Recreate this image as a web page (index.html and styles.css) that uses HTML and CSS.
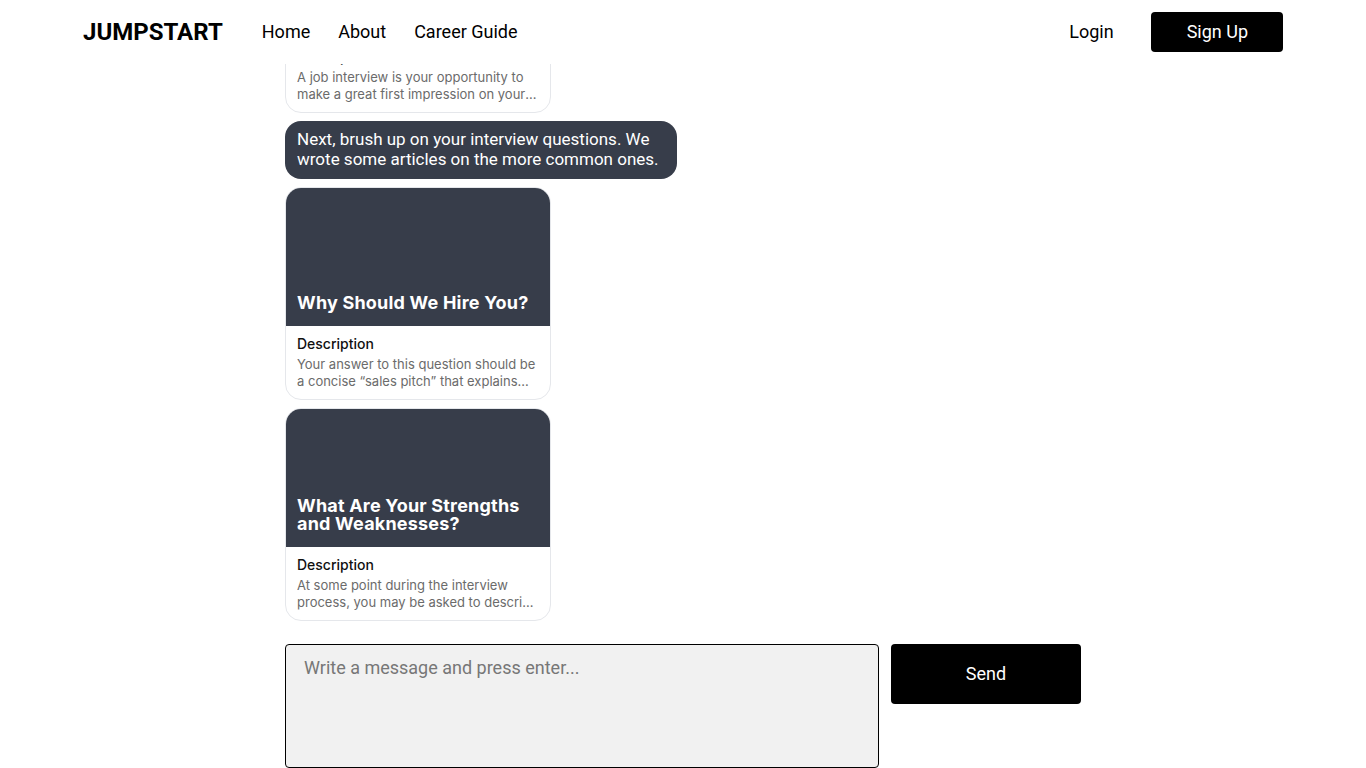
FILE: index.html
```html
<!DOCTYPE html>
<html lang="en">
<head>
<meta charset="utf-8">
<title>Jumpstart</title>
<link rel="stylesheet" href="styles.css">
</head>
<body>
<div class="page">
  <header class="header">
    <div class="header-left">
      <div class="logo">JUMPSTART</div>
      <nav class="nav">
        <a href="#">Home</a>
        <a href="#">About</a>
        <a href="#">Career Guide</a>
      </nav>
    </div>
    <div class="header-right">
      <a href="#" class="login">Login</a>
      <a href="#" class="signup">Sign Up</a>
    </div>
  </header>
  <main class="chat">
    <div class="messages">
      <div class="card">
        <div class="card-img"><h3>How to Prepare for a Job Interview</h3></div>
        <div class="card-body">
          <div class="card-label">Description</div>
          <p class="card-desc">A job interview is your opportunity to make a great first impression on your potential employer and show them why you are the right fit.</p>
        </div>
      </div>
      <div class="bubble">Next, brush up on your interview questions. We wrote some articles on the more common ones.</div>
      <div class="card">
        <div class="card-img"><h3>Why Should We Hire You?</h3></div>
        <div class="card-body">
          <div class="card-label">Description</div>
          <p class="card-desc">Your answer to this question should be a concise “sales pitch” that explains what you have to offer the employer.</p>
        </div>
      </div>
      <div class="card">
        <div class="card-img"><h3>What Are Your Strengths and Weaknesses?</h3></div>
        <div class="card-body">
          <div class="card-label">Description</div>
          <p class="card-desc">At some point during the interview process, you may be asked to describe your greatest strengths and weaknesses.</p>
        </div>
      </div>
    </div>
  </main>
  <form class="composer">
    <textarea class="input" placeholder="Write a message and press enter..."></textarea>
    <button type="button" class="send">Send</button>
  </form>
</div>
</body>
</html>
```
FILE: styles.css
```css
* { box-sizing: border-box; }
html, body { margin: 0; padding: 0; }
body {
  background: #fff;
  font-family: Roboto, "Liberation Sans", sans-serif;
  color: #000;
  overflow: hidden;
}
.page {
  height: 100vh;
  display: flex;
  flex-direction: column;
}
.header {
  height: 64px;
  flex: none;
  display: flex;
  align-items: center;
  justify-content: space-between;
  padding: 0 83px;
  background: #fff;
}
.header-left { display: flex; align-items: center; }
.logo {
  font-size: 24px;
  line-height: 28px;
  font-weight: 700;
  margin-right: 39px;
  margin-top: -1px;
}
.nav { display: flex; gap: 28px; }
.nav a, .login {
  color: #000;
  text-decoration: none;
  font-size: 18px;
  line-height: 22px;
}
.header-right { display: flex; align-items: center; gap: 37px; }
.signup {
  background: #000;
  color: #fff;
  text-decoration: none;
  font-size: 18px;
  height: 40px;
  line-height: 39px;
  padding: 0 35px 0 36px;
  border-radius: 4px;
}
.chat {
  flex: 1;
  min-height: 0;
  overflow: hidden;
  display: flex;
  flex-direction: column;
  justify-content: flex-end;
  width: 796px;
  margin: 0 auto;
  padding-bottom: 23px;
}
.messages {
  display: flex;
  flex-direction: column;
  align-items: flex-start;
  gap: 8px;
}
.card {
  width: 266px;
  border: 1px solid #e5e7eb;
  border-radius: 16px;
  overflow: hidden;
  font-family: Inter, "Noto Sans", sans-serif;
}
.card-img {
  height: 139px;
  margin: -1px -1px 0;
  background: #373d4a;
  display: flex;
  align-items: flex-end;
  padding: 0 12px 14px;
}
.card-img h3 {
  margin: 0;
  color: #fff;
  font-size: 18px;
  line-height: 18px;
  font-weight: 700;
  letter-spacing: 0.2px;
}
.card-body { padding: 8px 11px 9px; }
.card-label {
  font-size: 14px;
  line-height: 20px;
  font-weight: 500;
  color: #111;
}
.card-desc {
  margin: 2px 0 0;
  font-size: 13px;
  line-height: 17px;
  color: #6b6b6b;
  display: -webkit-box;
  -webkit-line-clamp: 2;
  -webkit-box-orient: vertical;
  overflow: hidden;
}
.bubble {
  max-width: 392px;
  background: #373d4a;
  color: #fff;
  font-size: 17px;
  line-height: 20px;
  padding: 8px 12px 10px;
  border-radius: 16px;
}
.composer {
  flex: none;
  width: 796px;
  margin: 0 auto;
  display: flex;
  align-items: flex-start;
  gap: 12px;
}
.input {
  width: 594px;
  height: 124px;
  resize: none;
  background: #f1f1f1;
  border: 1px solid #000;
  border-radius: 4px;
  padding: 12px 18px;
  font-family: Roboto, "Liberation Sans", sans-serif;
  font-size: 18px;
  line-height: 22px;
  outline: none;
}
.input::placeholder { color: #777; }
.send {
  width: 190px;
  height: 60px;
  background: #000;
  color: #fff;
  border: none;
  border-radius: 4px;
  font-family: Roboto, "Liberation Sans", sans-serif;
  font-size: 18px;
  padding: 0 0 2px;
}
```
